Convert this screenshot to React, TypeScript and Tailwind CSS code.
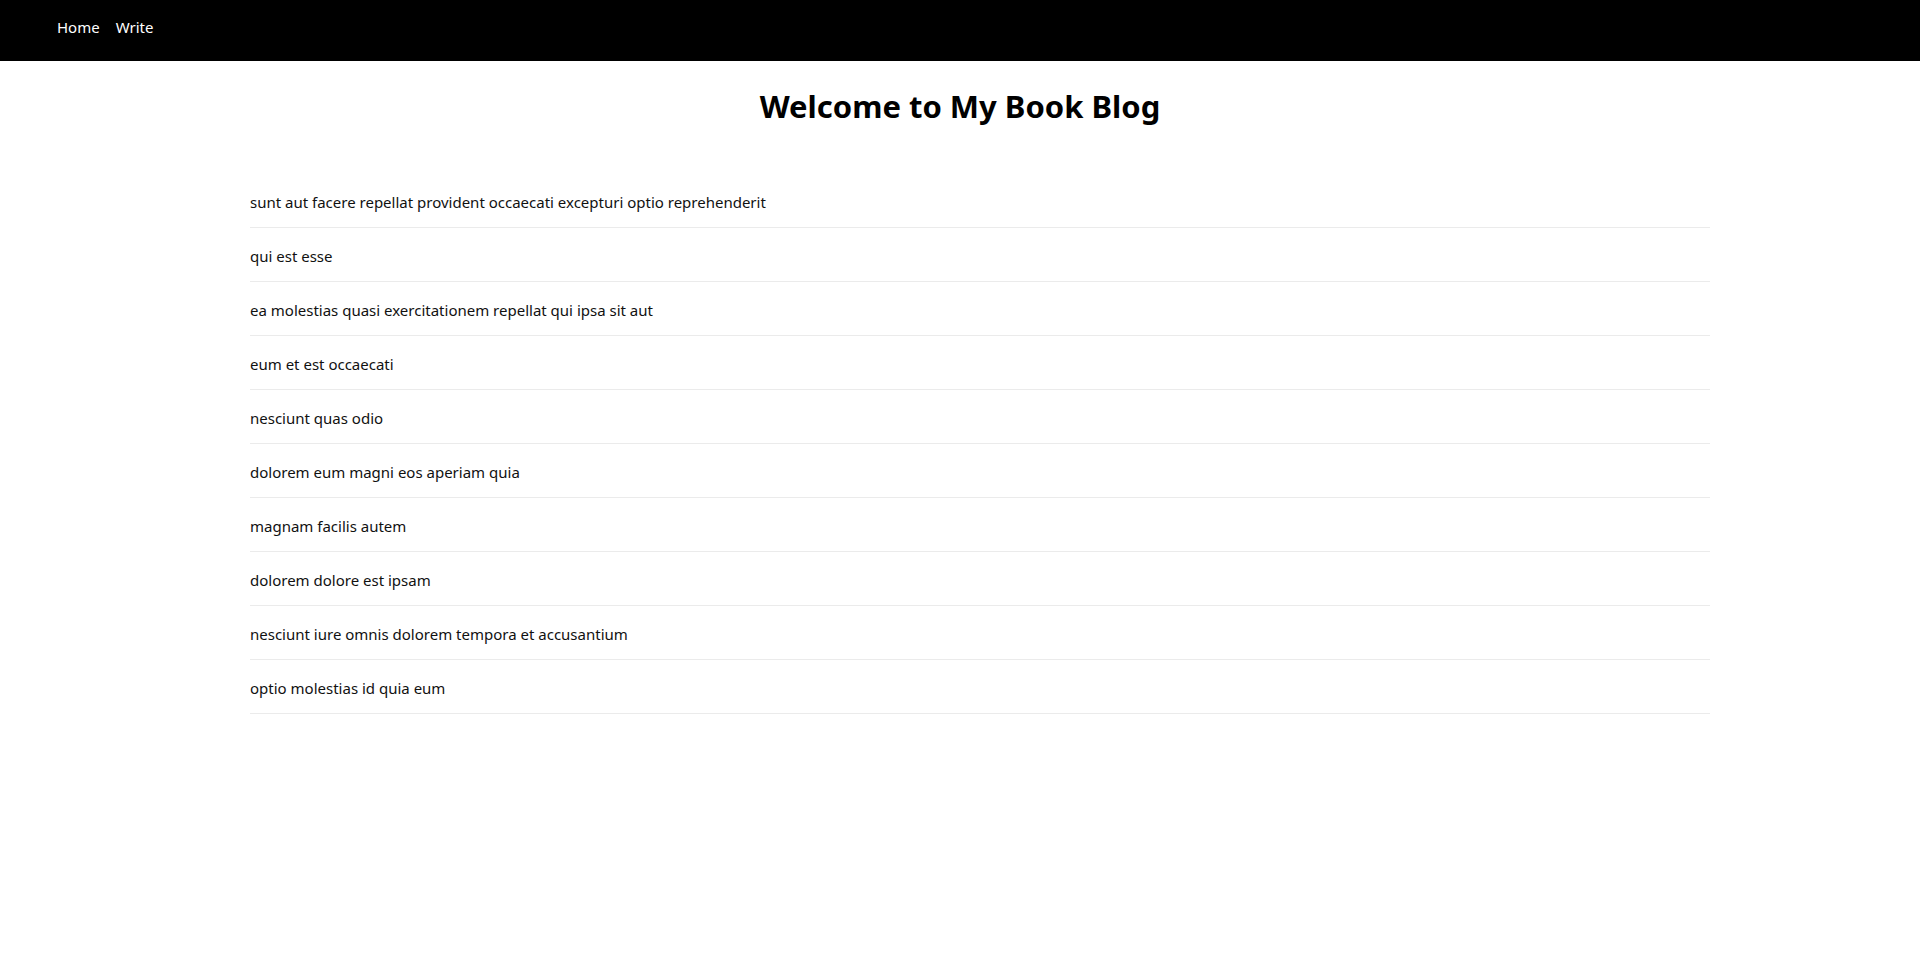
import React from 'react';

const posts = [
    'sunt aut facere repellat provident occaecati excepturi optio reprehenderit',
    'qui est esse',
    'ea molestias quasi exercitationem repellat qui ipsa sit aut',
    'eum et est occaecati',
    'nesciunt quas odio',
    'dolorem eum magni eos aperiam quia',
    'magnam facilis autem',
    'dolorem dolore est ipsam',
    'nesciunt iure omnis dolorem tempora et accusantium',
    'optio molestias id quia eum',
];

export default function App() {
    return (
        <div className="min-h-screen bg-white text-black font-['Noto_Sans','Open_Sans',sans-serif]">
            {/* Top nav */}
            <nav className="h-[61px] bg-black flex items-center pl-[57px] gap-[16px] pb-[6px]">
                <a className="text-white text-[15px]">Home</a>
                <a className="text-white text-[15px]">Write</a>
            </nav>

            <h1 className="text-center text-[31px] font-bold mt-[23px] leading-[45px]">Welcome to My Book Blog</h1>

            <ul className="ml-[250px] w-[1460px] mt-[45px]">
                {posts.map((title) => (
                    <li key={title} className="h-[54px] flex items-center pt-[3px] border-b border-[#ebebeb] text-[15px] text-[#111]">
                        {title}
                    </li>
                ))}
            </ul>
        </div>
    );
}
